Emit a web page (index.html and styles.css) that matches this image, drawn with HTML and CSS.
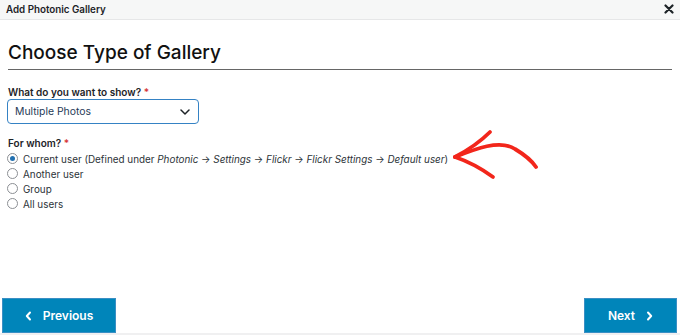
FILE: index.html
```html
<!DOCTYPE html>
<html>
<head>
<meta charset="utf-8">
<link rel="stylesheet" href="styles.css">
</head>
<body>
<div class="modal">
  <div class="titlebar">
    <span class="title">Add Photonic Gallery</span>
    <span class="close">
      <svg width="10" height="10" viewBox="0 0 10 10"><path d="M1.5 1.5 L8.5 8.5 M8.5 1.5 L1.5 8.5" stroke="#1d2327" stroke-width="2.2" stroke-linecap="round"/></svg>
    </span>
  </div>
  <div class="content">
    <h1 class="heading">Choose Type of Gallery</h1>
    <div class="field">
      <label class="label">What do you want to show? <span class="req">*</span></label>
      <div class="select">
        <span>Multiple Photos</span>
        <svg width="10" height="6" viewBox="0 0 10 6"><path d="M1 1 L5 5 L9 1" fill="none" stroke="#1d2327" stroke-width="1.5" stroke-linecap="round" stroke-linejoin="round"/></svg>
      </div>
    </div>
    <div class="field field2">
      <label class="label">For whom? <span class="req">*</span></label>
      <div class="radios">
        <div class="radio-row"><span class="radio checked"></span><span>Current user (Defined under <em>Photonic</em> → <em>Settings</em> → <em>Flickr</em> → <em>Flickr Settings</em> → <em>Default user</em>)</span></div>
        <div class="radio-row"><span class="radio"></span><span>Another user</span></div>
        <div class="radio-row"><span class="radio"></span><span>Group</span></div>
        <div class="radio-row"><span class="radio"></span><span>All users</span></div>
      </div>
    </div>
  </div>
  <svg class="arrow" width="680" height="335" viewBox="0 0 680 335">
    <g fill="none" stroke="#f2261b" stroke-width="3.8" stroke-linecap="round" stroke-linejoin="round">
      <path d="M455 157 C 470 149 480 142 490 132"/>
      <path d="M455 157 C 475 149 500 139 515 149 C 525 155 532 161 536 167"/>
      <path d="M455 157 C 470 162 482 169 493 177"/>
    </g>
  </svg>
  <div class="footer">
    <button class="btn prev">
      <svg width="7" height="10" viewBox="0 0 7 10"><path d="M5 1.5 L1.8 5 L5 8.5" fill="none" stroke="#fff" stroke-width="2" stroke-linecap="round" stroke-linejoin="round"/></svg>
      <span>Previous</span>
    </button>
    <button class="btn next">
      <span>Next</span>
      <svg width="7" height="10" viewBox="0 0 7 10"><path d="M2 1.5 L5.2 5 L2 8.5" fill="none" stroke="#fff" stroke-width="2" stroke-linecap="round" stroke-linejoin="round"/></svg>
    </button>
  </div>
</div>
</body>
</html>
```

FILE: styles.css
```css
html, body {
  margin: 0;
  padding: 0;
  background: #f0f0f1;
}
body {
  width: 680px;
  height: 335px;
  overflow: hidden;
  font-family: Inter, "Noto Sans", sans-serif;
  color: #1d2327;
}
.modal {
  position: relative;
  width: 680px;
  height: 333px;
  background: #fff;
  display: flex;
  flex-direction: column;
}
.titlebar {
  height: 20px;
  background: #f6f7f7;
  border-bottom: 1px solid #e6e7e8;
  display: flex;
  align-items: center;
  justify-content: space-between;
  padding: 0 6px 0 6px;
  box-sizing: border-box;
}
.title {
  font-size: 9.8px;
  font-weight: 600;
  color: #1d2327;
}
.close {
  display: flex;
  margin-top: -2px;
}
.content {
  padding: 0 8px;
}
.heading {
  margin: 20px 0 0 0;
  font-size: 19px;
  font-weight: 500;
  line-height: 25px;
  padding-bottom: 4px;
  border-bottom: 1.5px solid #666;
  color: #111;
}
.field {
  margin-top: 16px;
}
.field2 {
  margin-top: 13px;
}
.label {
  display: block;
  font-size: 10px;
  font-weight: 600;
  line-height: 13px;
  color: #1d2327;
}
.req {
  color: #d63638;
}
.select {
  margin-left: -1px;
  width: 192px;
  height: 25px;
  box-sizing: border-box;
  border: 1px solid #3582c4;
  border-radius: 4px;
  display: flex;
  align-items: center;
  justify-content: space-between;
  padding: 0 8px 0 7px;
  font-size: 10.4px;
  color: #1f3b57;
}
.radios {
  margin-top: 1px;
}
.radio-row {
  display: flex;
  align-items: center;
  height: 15px;
  font-size: 9.9px;
  color: #2c3338;
}
.radio-row em {
  font-style: italic;
}
.radio {
  width: 11px;
  height: 11px;
  box-sizing: border-box;
  border: 1px solid #8c8f94;
  border-radius: 50%;
  margin: 0 5px 0 -1px;
  flex-shrink: 0;
  display: flex;
  align-items: center;
  justify-content: center;
  background: #fff;
}
.radio.checked::after {
  content: "";
  width: 5px;
  height: 5px;
  border-radius: 50%;
  background: #2271b1;
}
.arrow {
  position: absolute;
  left: 0;
  top: 0;
  pointer-events: none;
}
.footer {
  margin-top: auto;
  display: flex;
  justify-content: space-between;
  padding: 0 3px 0 2px;
}
.btn {
  height: 35px;
  background: #0085ba;
  border: 1px solid #3a8fc4;
  border-radius: 0;
  color: #fff;
  font-family: Inter, "Noto Sans", sans-serif;
  font-size: 12px;
  font-weight: 600;
  display: flex;
  align-items: center;
  justify-content: center;
  padding: 0;
  box-sizing: border-box;
}
.prev {
  width: 114px;
  gap: 11px;
}
.next {
  width: 93px;
  gap: 11px;
}
```
